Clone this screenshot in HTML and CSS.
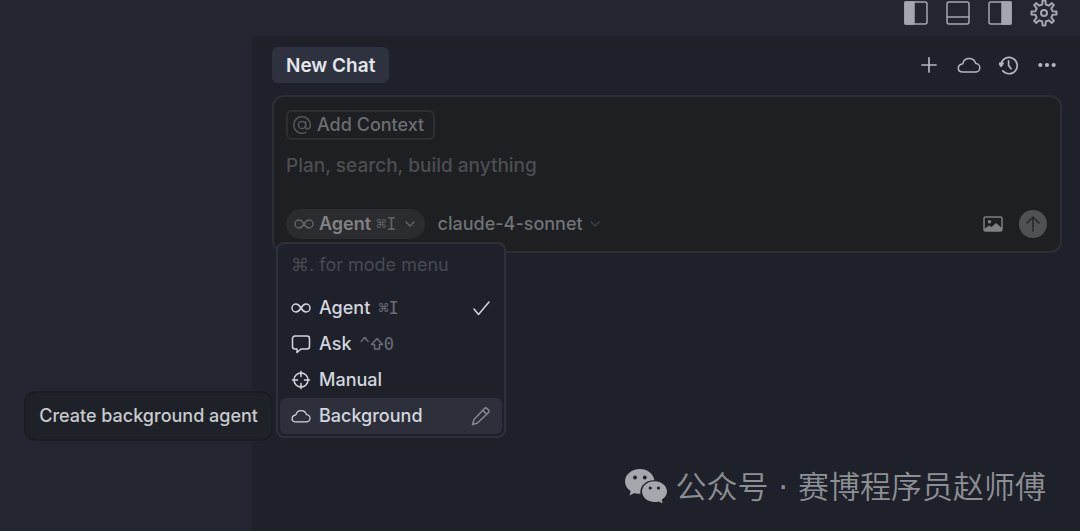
FILE: index.html
```
<!DOCTYPE html>
<html lang="en">
<head>
  <meta charset="UTF-8">
  <title>New Chat</title>
  <meta name="viewport" content="width=device-width, initial-scale=1.0">
  <link rel="stylesheet" href="styles.css">
</head>
<body>
  <!-- Shared icons -->
  <svg class="sprite" aria-hidden="true">
    <symbol id="infinity" viewBox="0 0 20 20">
      <path d="M10 10C8.500 7.500 7 6 5 6a4 4 0 0 0 0 8c2 0 3.500-1.500 5-4s3-4 5-4a4 4 0 0 1 0 8c-2 0-3.500-1.500-5-4z"/>
    </symbol>
    <symbol id="cloud" viewBox="0 0 24 24">
      <path d="M6 19h12.200a4.300 4.300 0 0 0 .6-8.600C17.900 7.900 16 5.500 12 5.500c-3.400 0-5.500 2-6.200 5.200C3 11.300 1.300 13 1.300 15.200 1.300 17.500 3.200 19 6 19z"/>
    </symbol>
    <symbol id="chevron" viewBox="0 0 12 12">
      <path d="M2 4l4 4 4-4"/>
    </symbol>
  </svg>

  <header class="topbar">
    <button class="icon-btn" aria-label="Toggle left panel">
      <svg class="icon-lg" viewBox="0 0 24 24"><rect x="1" y="1" width="22" height="22" rx="2"/><path class="solid" d="M1 1h9v22H1z"/></svg>
    </button>
    <button class="icon-btn" aria-label="Toggle bottom panel">
      <svg class="icon-lg" viewBox="0 0 24 24"><rect x="1" y="1" width="22" height="22" rx="2"/><path d="M1 16h22"/></svg>
    </button>
    <button class="icon-btn" aria-label="Toggle right panel">
      <svg class="icon-lg" viewBox="0 0 24 24"><rect x="1" y="1" width="22" height="22" rx="2"/><path class="solid" d="M14 1h9v22h-9z"/></svg>
    </button>
    <button class="icon-btn" aria-label="Settings">
      <svg class="icon-gear" viewBox="0 0 28 28">
        <path d="M12.200 5.500 12.600 1.500h2.800l.4 4 2.900 1.200 3.200-2.600 2 2-2.600 3.200 1.200 2.900 4 .4v2.800l-4 .4-1.200 2.900 2.600 3.200-2 2-3.200-2.600-2.900 1.200-.4 4h-2.800l-.4-4-2.900-1.200-3.200 2.600-2-2 2.600-3.200-1.200-2.900-4-.4v-2.800l4-.4 1.200-2.900-2.600-3.200 2-2 3.200 2.600z"/>
        <circle cx="14" cy="14" r="3"/>
      </svg>
    </button>
  </header>

  <div class="workspace">
    <div class="editor"></div>

    <main class="panel">
      <div class="panel-head">
        <button class="tab">New Chat</button>
        <div class="actions">
          <button class="icon-btn" aria-label="New chat">
            <svg class="icon" viewBox="0 0 24 24"><path d="M12 3.500v17M3.500 12h17"/></svg>
          </button>
          <button class="icon-btn" aria-label="Background agents">
            <svg class="icon icon-wide"><use href="#cloud"/></svg>
          </button>
          <button class="icon-btn" aria-label="History">
            <svg class="icon" viewBox="0 0 24 24">
              <path d="M2.500 10.500A9.800 9.800 0 1 1 4.500 19"/>
              <path class="solid" d="M0 10h5l-2.500 3.500z"/>
              <path d="M11.500 7v5.500l3 4"/>
            </svg>
          </button>
          <button class="icon-btn" aria-label="More">
            <svg class="icon" viewBox="0 0 24 24">
              <circle class="solid" cx="4" cy="12" r="1.500"/><circle class="solid" cx="12" cy="12" r="1.500"/><circle class="solid" cx="20" cy="12" r="1.500"/>
            </svg>
          </button>
        </div>
      </div>

      <form class="composer">
        <button type="button" class="context-btn">
          <svg class="icon-sm" viewBox="0 0 20 20">
            <circle cx="10" cy="10" r="3.600"/>
            <path d="M13.600 6.500v5.200c0 1.400.8 2.200 2 2.200 1.500 0 2.700-1.500 2.700-3.900A8.300 8.300 0 1 0 14 17.300"/>
          </svg>
          Add Context
        </button>
        <textarea class="prompt" rows="1" aria-label="Message" placeholder="Plan, search, build anything"></textarea>

        <div class="toolbar">
          <div class="mode">
            <button type="button" class="mode-btn" aria-haspopup="menu" aria-expanded="true">
              <svg class="icon-sm"><use href="#infinity"/></svg>
              <span>Agent</span>
              <kbd>⌘I</kbd>
              <svg class="chevron"><use href="#chevron"/></svg>
            </button>

            <div class="menu" role="menu">
              <p class="menu-hint">⌘. for mode menu</p>
              <button type="button" class="menu-item" role="menuitem">
                <svg class="icon-sm"><use href="#infinity"/></svg>
                <span>Agent</span>
                <kbd>⌘I</kbd>
                <svg class="icon-sm end" viewBox="0 0 20 20"><path d="M3 11l4.500 5.500L18 4"/></svg>
              </button>
              <button type="button" class="menu-item" role="menuitem">
                <svg class="icon-sm" viewBox="0 0 20 20"><path d="M4 2h12a2.500 2.500 0 0 1 2.500 2.500v8A2.500 2.500 0 0 1 16 15h-6l-4 3.500V15H4a2.500 2.500 0 0 1-2.500-2.500v-8A2.500 2.500 0 0 1 4 2z"/></svg>
                <span>Ask</span>
                <kbd>^<svg class="shift" viewBox="0 0 14 14"><path d="M7 1.500 1.500 7.500H4.500v4.500h5V7.500h3z"/></svg>0</kbd>
              </button>
              <button type="button" class="menu-item" role="menuitem">
                <svg class="icon-sm" viewBox="0 0 20 20"><circle cx="10" cy="10" r="7"/><path d="M10 1.500v5M10 13.500v5M1.500 10h5M13.500 10h5"/></svg>
                <span>Manual</span>
              </button>
              <button type="button" class="menu-item active" role="menuitem" aria-describedby="bg-tip">
                <svg class="icon-sm"><use href="#cloud"/></svg>
                <span>Background</span>
                <svg class="icon-sm end dim" viewBox="0 0 20 20"><path d="M1.500 18.500l1.500-5L13.500 2.500a1.800 1.800 0 0 1 2.500 0l1.500 1.500a1.800 1.800 0 0 1 0 2.500L6.500 17zM12 4.500l3.500 3.500"/></svg>
                <span class="tooltip" id="bg-tip" role="tooltip">Create background agent</span>
              </button>
            </div>
          </div>

          <div class="model">
            <select aria-label="Model">
              <option>claude-4-sonnet</option>
            </select>
            <svg class="chevron"><use href="#chevron"/></svg>
          </div>

          <button type="button" class="icon-btn image-btn" aria-label="Attach image">
            <svg class="icon-sm" viewBox="0 0 20 20">
              <rect x="1" y="3" width="18" height="14" rx="1.500"/>
              <circle class="solid" cx="6.500" cy="7.800" r="1.800"/>
              <path class="solid" d="M1 15l5-3.500 2.500 1.500L13 9l6 5v3H1z"/>
            </svg>
          </button>
          <button type="submit" class="send-btn" aria-label="Send">
            <svg class="icon-sm" viewBox="0 0 20 20"><path d="M10 17V3M4 9l6-6 6 6"/></svg>
          </button>
        </div>
      </form>
    </main>
  </div>

  <div class="watermark" lang="zh-CN">
    <svg class="wechat" viewBox="0 0 42 34">
      <path d="M15 0C6.700 0 0 5.500 0 12.500c0 4 2.200 7.300 5.700 9.600L4.500 26.500l5-2.600c1.800.6 3.600.8 5.900.8C14.500 17 21 11 29.500 11.300 28.300 4.700 22.200 0 15 0z"/>
      <path d="M29.500 12.300c-7 0-12.500 4.600-12.500 10.300 0 5.800 5.500 10.400 12.500 10.400 1.500 0 2.900-.2 4.200-.6l4.100 2-1.100-3.600c3.200-1.900 5.300-4.900 5.300-8.200 0-5.700-5.600-10.300-12.500-10.300z"/>
      <g class="eyes"><circle cx="10" cy="8.500" r="1.900"/><circle cx="19.800" cy="8.500" r="1.900"/><circle cx="25.200" cy="19" r="1.600"/><circle cx="33.500" cy="19" r="1.600"/></g>
    </svg>
    <span>公众号<span class="dot"> · </span>赛博程序员赵师傅</span>
  </div>
</body>
</html>
```
FILE: styles.css
```
* { box-sizing: border-box; margin: 0; padding: 0; }
body {
  font-family: Inter, "Liberation Sans", "Noto Sans CJK SC", sans-serif;
  font-size: 18px;
  font-weight: 500;
  line-height: 24px;
  color: #d3d6de;
  background: #1e2129;
  min-height: 100vh;
  display: flex;
  flex-direction: column;
}
button, select, textarea {
  font: inherit;
  color: inherit;
  background: none;
  border: none;
}
button { cursor: pointer; }
svg {
  display: block;
  flex: none;
  fill: none;
  stroke: currentColor;
  stroke-width: 1.5;
  stroke-linecap: round;
  stroke-linejoin: round;
}
.solid { fill: currentColor; }
.sprite {
  position: absolute;
  width: 0;
  height: 0;
}
.icon-lg { width: 24px; height: 24px; }
.icon-gear { width: 28px; height: 28px; stroke-width: 2; }
.icon { width: 20px; height: 20px; stroke-width: 2; }
.icon-wide { width: 24px; height: 24px; stroke-width: 1.5; }
.icon-sm { width: 20px; height: 20px; }
.chevron { width: 12px; height: 12px; }
.icon-btn {
  display: flex;
  align-items: center;
  justify-content: center;
}

/* top bar */
.topbar {
  display: flex;
  align-items: center;
  justify-content: flex-end;
  gap: 18px;
  height: 36px;
  padding: 0 22px 10px 0;
  background: #232630;
  color: #a3a6b1;
}

/* layout */
.workspace {
  flex: 1;
  display: flex;
}
.editor {
  width: 252px;
  flex: none;
  background: #232630;
}
.panel {
  flex: 1;
  padding: 11px 18px 20px 20px;
}
.panel-head {
  display: flex;
  align-items: center;
  justify-content: space-between;
  margin-bottom: 12px;
}
.tab {
  padding: 7px 14px 5px;
  font-size: 19px;
  font-weight: 600;
  color: #e3e6ec;
  background: #2e323e;
  border-radius: 6px;
}
.actions {
  display: flex;
  align-items: center;
  gap: 18px;
  padding-right: 5px;
  color: #b4b7bf;
}

/* composer */
.composer {
  padding: 13px 13px 12px 12px;
  background: #1d1f22;
  border: 2px solid #2b2e33;
  border-radius: 12px;
}
.context-btn {
  display: flex;
  align-items: center;
  gap: 5px;
  height: 30px;
  padding: 0 9px 0 4px;
  color: #6b6d70;
  border: 2px solid #2d2f32;
  border-radius: 6px;
}
.context-btn svg { color: #55575a; }
.prompt {
  display: block;
  width: 100%;
  height: 24px;
  margin: 14px 0 31px;
  font-size: 19px;
  resize: none;
  overflow: hidden;
  outline: none;
}
.prompt::placeholder { color: #4c4e52; }
.toolbar {
  display: flex;
  align-items: center;
}
.mode { position: relative; }
.mode-btn {
  display: flex;
  align-items: center;
  gap: 5px;
  height: 30px;
  padding: 0 9px 0 8px;
  font-weight: 600;
  color: #808286;
  background: #2b2c2f;
  border-radius: 15px;
}
.mode-btn .chevron { margin-left: 2px; }
.mode-btn svg, .mode-btn kbd { color: #606266; }
kbd {
  display: flex;
  align-items: center;
  font-family: "DejaVu Sans Mono", monospace;
  font-size: 17px;
  font-weight: 400;
  color: #6a6d75;
}
.shift { width: 14px; height: 14px; }
.model {
  display: flex;
  align-items: center;
  gap: 5px;
  margin-left: 13px;
  color: #707276;
}
.model select { appearance: none; }
.model .chevron { color: #3f4145; }
.image-btn {
  margin-left: auto;
  color: #7d7f82;
}
.image-btn .solid { stroke-width: 0; }
.send-btn {
  display: flex;
  align-items: center;
  justify-content: center;
  width: 28px;
  height: 28px;
  margin-left: 16px;
  color: #25272a;
  background: #505154;
  border-radius: 50%;
}

/* mode menu */
.menu {
  position: absolute;
  top: 33px;
  left: -10px;
  width: 230px;
  padding: 4px 2px 2px;
  background: #1e212a;
  border: 2px solid #2d3038;
  border-radius: 8px;
}
.menu-hint {
  padding: 5px 11px 13px;
  font-weight: 400;
  color: #474a52;
}
.menu-item {
  position: relative;
  display: flex;
  align-items: center;
  gap: 8px;
  width: 100%;
  height: 36px;
  padding: 0 11px;
  border-radius: 6px;
}
.menu-item.active { background: #2d303b; }
.menu-item .end { margin-left: auto; }
.menu-item .dim { color: #858891; }
.tooltip {
  position: absolute;
  top: -7px;
  right: calc(100% + 7px);
  padding: 11px 13px;
  color: #c8cacd;
  white-space: nowrap;
  background: #1e2127;
  border: 2px solid #1a1c22;
  border-radius: 12px;
}

/* watermark */
.watermark {
  position: absolute;
  right: 34px;
  bottom: 24px;
  display: flex;
  align-items: center;
  gap: 8px;
  font-family: "Noto Sans CJK SC", sans-serif;
  font-size: 31px;
  font-weight: 350;
  line-height: 40px;
  color: #8c8f94;
}
.dot {
  font-family: "DejaVu Sans", sans-serif;
  font-weight: 400;
}
.wechat {
  width: 42px;
  height: 34px;
  fill: #a4a7ac;
  stroke: none;
}
.eyes { fill: #1e2129; }
```
